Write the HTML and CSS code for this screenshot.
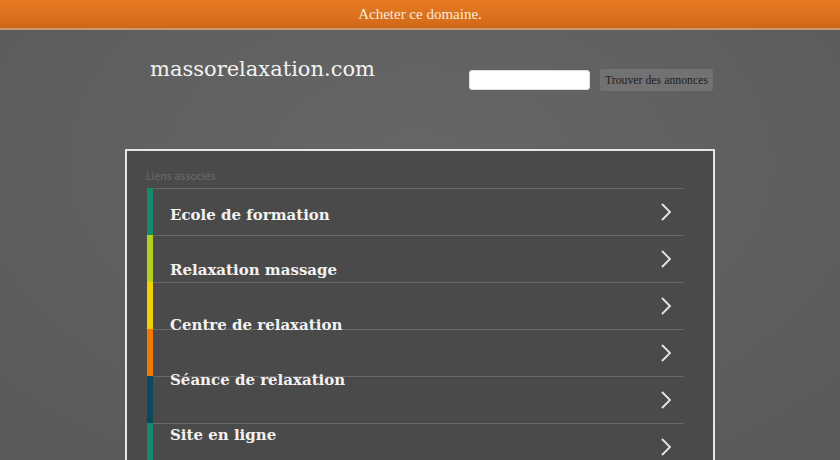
FILE: index.html
```html
<!DOCTYPE html>
<html lang="fr">
<head>
<meta charset="utf-8">
<title>massorelaxation.com</title>
<link rel="stylesheet" href="styles.css">
</head>
<body>
<div class="topbar"><a class="topbar-link" href="#">Acheter ce domaine.</a></div>
<div class="wrap">
  <header class="header">
    <h1 class="domain">massorelaxation.com</h1>
    <form class="search">
      <input class="search-input" type="text">
      <button class="search-btn" type="button">Trouver des annonces</button>
    </form>
  </header>
  <section class="box">
    <div class="box-title">Liens associés</div>
    <div class="links">
      <ul class="rows">
        <li class="row"><span class="bar c1"></span><span class="row-body"><svg class="chev" viewBox="0 0 12 20"><path d="M2 2 L10 10 L2 18"/></svg></span></li>
        <li class="row"><span class="bar c2"></span><span class="row-body"><svg class="chev" viewBox="0 0 12 20"><path d="M2 2 L10 10 L2 18"/></svg></span></li>
        <li class="row"><span class="bar c3"></span><span class="row-body"><svg class="chev" viewBox="0 0 12 20"><path d="M2 2 L10 10 L2 18"/></svg></span></li>
        <li class="row"><span class="bar c4"></span><span class="row-body"><svg class="chev" viewBox="0 0 12 20"><path d="M2 2 L10 10 L2 18"/></svg></span></li>
        <li class="row"><span class="bar c5"></span><span class="row-body"><svg class="chev" viewBox="0 0 12 20"><path d="M2 2 L10 10 L2 18"/></svg></span></li>
        <li class="row"><span class="bar c1"></span><span class="row-body"><svg class="chev" viewBox="0 0 12 20"><path d="M2 2 L10 10 L2 18"/></svg></span></li>
      </ul>
      <ul class="labels">
        <li class="label">Ecole de formation</li>
        <li class="label">Relaxation massage</li>
        <li class="label">Centre de relaxation</li>
        <li class="label">Séance de relaxation</li>
        <li class="label">Site en ligne</li>
      </ul>
    </div>
  </section>
</div>
</body>
</html>
```

FILE: styles.css
```css
html, body {
  margin: 0;
  padding: 0;
  height: 100%;
  overflow: hidden;
}
body {
  background: radial-gradient(ellipse 70% 80% at 50% 35%, #666666 0%, #5f5f5f 60%, #5a5a5a 100%);
  font-family: "DejaVu Serif", serif;
}
.topbar {
  height: 28px;
  background: linear-gradient(#e67b22, #d96f1c 70%, #cc6618);
  border-bottom: 2px solid #c49a6e;
  display: flex;
  align-items: center;
  justify-content: center;
}
.topbar-link {
  color: #f6ead8;
  text-decoration: none;
  font-family: "Liberation Serif", serif;
  font-size: 15px;
}
.wrap {
  width: 590px;
  margin: 0 auto;
}
.header {
  height: 119px;
  display: flex;
  justify-content: space-between;
  align-items: flex-start;
  padding: 0 2px 0 25px;
}
.domain {
  margin: 24px 0 0;
  font-family: "DejaVu Serif", serif;
  font-weight: normal;
  font-size: 21px;
  line-height: 30px;
  color: #f2f2f2;
}
.search {
  margin-top: 39px;
  display: flex;
  align-items: center;
  gap: 10px;
}
.search-input {
  width: 121px;
  height: 20px;
  box-sizing: border-box;
  border: 1px solid #ddd;
  border-radius: 3px;
  background: #fff;
  padding: 0;
}
.search-btn {
  width: 113px;
  height: 22px;
  border: none;
  border-radius: 3px;
  background: #727272;
  color: #1e1e1e;
  font-family: "Liberation Serif", serif;
  font-size: 11.8px;
  padding: 0;
}
.box {
  border: 2px solid #e6e6e6;
  background: #4a4a4a;
  padding: 0 29px 0 19px;
  height: 400px;
}
.box-title {
  padding-top: 18px;
  height: 19px;
  line-height: 14px;
  font-family: "Open Sans", sans-serif;
  font-size: 10.6px;
  color: #6e6e6e;
}
.links {
  display: grid;
}
.rows, .labels {
  grid-area: 1 / 1;
  list-style: none;
  margin: 0;
  padding: 0;
}
.row {
  display: flex;
  height: 47px;
}
.bar {
  width: 6px;
  margin-left: 1px;
}
.c1 { background: #178a6c; }
.c2 { background: #b3cf1f; }
.c3 { background: #f3d100; }
.c4 { background: #f27a00; }
.c5 { background: #0b4a5e; }
.row-body {
  flex: 1;
  border-top: 1px solid #686868;
  display: flex;
  align-items: center;
  justify-content: flex-end;
  padding-right: 12px;
}
.chev {
  width: 12px;
  height: 20px;
  fill: none;
  stroke: #e6e6e6;
  stroke-width: 1.8;
}
.labels {
  padding: 0 0 0 24px;
}
.label {
  height: 55px;
  line-height: 55px;
  font-family: "DejaVu Serif", serif;
  font-weight: bold;
  font-size: 15px;
  color: #f2f2f2;
}
```
